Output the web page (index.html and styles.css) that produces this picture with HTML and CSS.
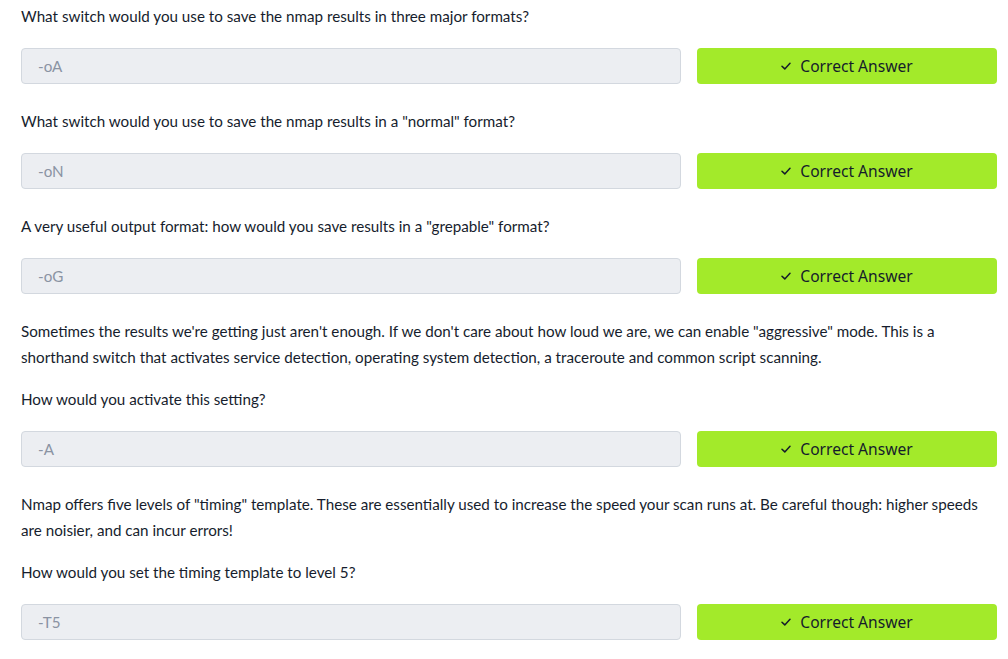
FILE: index.html
```html
<!DOCTYPE html>
<html lang="en">
<head>
<meta charset="utf-8">
<title>Nmap output questions</title>
<link rel="stylesheet" href="styles.css">
</head>
<body>
<main class="tasks">
  <section class="question">
    <p class="q-text">What switch would you use to save the nmap results in three major formats?</p>
    <div class="answer-row">
      <div class="answer-input">-oA</div>
      <button class="answer-btn" type="button"><svg class="check" viewBox="0 0 10 8" width="10" height="8"><path d="M1 4.2 L3.8 6.9 L9 1.2" fill="none" stroke="currentColor" stroke-width="1.5" stroke-linecap="round" stroke-linejoin="round"/></svg>Correct Answer</button>
    </div>
  </section>
  <section class="question">
    <p class="q-text">What switch would you use to save the nmap results in a "normal" format?</p>
    <div class="answer-row">
      <div class="answer-input">-oN</div>
      <button class="answer-btn" type="button"><svg class="check" viewBox="0 0 10 8" width="10" height="8"><path d="M1 4.2 L3.8 6.9 L9 1.2" fill="none" stroke="currentColor" stroke-width="1.5" stroke-linecap="round" stroke-linejoin="round"/></svg>Correct Answer</button>
    </div>
  </section>
  <section class="question">
    <p class="q-text">A very useful output format: how would you save results in a "grepable" format?</p>
    <div class="answer-row">
      <div class="answer-input">-oG</div>
      <button class="answer-btn" type="button"><svg class="check" viewBox="0 0 10 8" width="10" height="8"><path d="M1 4.2 L3.8 6.9 L9 1.2" fill="none" stroke="currentColor" stroke-width="1.5" stroke-linecap="round" stroke-linejoin="round"/></svg>Correct Answer</button>
    </div>
  </section>
  <section class="question">
    <p class="q-desc">Sometimes the results we're getting just aren't enough. If we don't care about how loud we are, we can enable "aggressive" mode. This is a shorthand switch that activates service detection, operating system detection, a traceroute and common script scanning.</p>
    <p class="q-text">How would you activate this setting?</p>
    <div class="answer-row">
      <div class="answer-input">-A</div>
      <button class="answer-btn" type="button"><svg class="check" viewBox="0 0 10 8" width="10" height="8"><path d="M1 4.2 L3.8 6.9 L9 1.2" fill="none" stroke="currentColor" stroke-width="1.5" stroke-linecap="round" stroke-linejoin="round"/></svg>Correct Answer</button>
    </div>
  </section>
  <section class="question">
    <p class="q-desc">Nmap offers five levels of "timing" template. These are essentially used to increase the speed your scan runs at. Be careful though: higher speeds are noisier, and can incur errors!</p>
    <p class="q-text">How would you set the timing template to level 5?</p>
    <div class="answer-row">
      <div class="answer-input">-T5</div>
      <button class="answer-btn" type="button"><svg class="check" viewBox="0 0 10 8" width="10" height="8"><path d="M1 4.2 L3.8 6.9 L9 1.2" fill="none" stroke="currentColor" stroke-width="1.5" stroke-linecap="round" stroke-linejoin="round"/></svg>Correct Answer</button>
    </div>
  </section>
</main>
</body>
</html>
```
FILE: styles.css
```css
html, body {
  margin: 0;
  padding: 0;
  background: #ffffff;
}
body {
  font-family: Lato, "Noto Sans", sans-serif;
  font-size: 15.2px;
  color: #161d2d;
}
.tasks {
  padding: 3px 11px 0 21px;
}
.question {
  margin-bottom: 24px;
}
.q-desc,
.q-text {
  margin: 0;
  line-height: 26px;
}
.q-desc {
  margin-bottom: 16px;
}
.answer-row {
  display: flex;
  gap: 16px;
  margin-top: 19px;
}
.answer-input {
  flex: 1;
  height: 36px;
  box-sizing: border-box;
  border: 1px solid #d3d8df;
  border-radius: 4px;
  background: #eceef2;
  color: #8a93a3;
  display: flex;
  align-items: center;
  padding: 0 16px;
  font-size: 15.2px;
}
.answer-btn {
  width: 300px;
  height: 36px;
  border: 0;
  border-radius: 4px;
  background: #a3ea2a;
  color: #151c2b;
  font-family: "Noto Sans", sans-serif;
  font-size: 15.6px;
  display: flex;
  align-items: center;
  justify-content: center;
  gap: 9px;
  padding: 0;
}
.check {
  display: block;
}
```
